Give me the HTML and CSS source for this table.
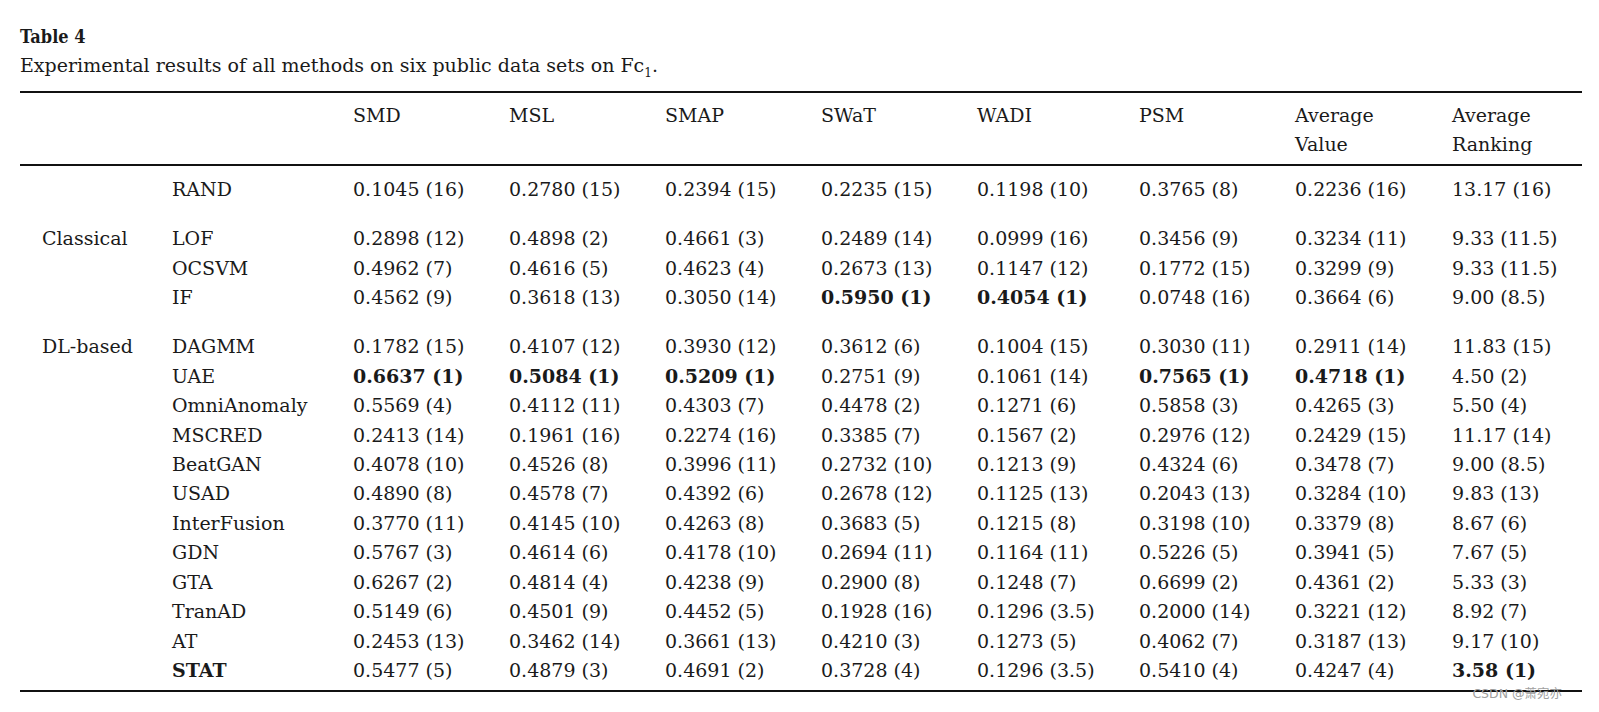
FILE: index.html
```html
<!DOCTYPE html>
<html lang="en">
<head>
<meta charset="utf-8">
<title>Table 4</title>
<link rel="stylesheet" href="styles.css">
</head>
<body>
<div class="page">
  <div class="title">Table 4</div>
  <div class="caption">Experimental results of all methods on six public data sets on Fc<sub>1</sub>.</div>
  <table class="results">
    <colgroup>
      <col class="c-group">
      <col class="c-method">
      <col class="c-num">
      <col class="c-num">
      <col class="c-num">
      <col class="c-num">
      <col class="c-wadi">
      <col class="c-num">
      <col class="c-avgv">
      <col class="c-avgr">
    </colgroup>
    <thead>
      <tr>
        <th class="grp"></th><th></th>
        <th>SMD</th><th>MSL</th><th>SMAP</th><th>SWaT</th><th>WADI</th><th>PSM</th>
        <th>Average<br>Value</th><th>Average<br>Ranking</th>
      </tr>
    </thead>
    <tbody>
      <tr class="first">
        <td class="grp"></td><td>RAND</td>
        <td>0.1045 (16)</td><td>0.2780 (15)</td><td>0.2394 (15)</td><td>0.2235 (15)</td><td>0.1198 (10)</td><td>0.3765 (8)</td><td>0.2236 (16)</td><td>13.17 (16)</td>
      </tr>
      <tr class="gap">
        <td class="grp">Classical</td><td>LOF</td>
        <td>0.2898 (12)</td><td>0.4898 (2)</td><td>0.4661 (3)</td><td>0.2489 (14)</td><td>0.0999 (16)</td><td>0.3456 (9)</td><td>0.3234 (11)</td><td>9.33 (11.5)</td>
      </tr>
      <tr>
        <td class="grp"></td><td>OCSVM</td>
        <td>0.4962 (7)</td><td>0.4616 (5)</td><td>0.4623 (4)</td><td>0.2673 (13)</td><td>0.1147 (12)</td><td>0.1772 (15)</td><td>0.3299 (9)</td><td>9.33 (11.5)</td>
      </tr>
      <tr>
        <td class="grp"></td><td>IF</td>
        <td>0.4562 (9)</td><td>0.3618 (13)</td><td>0.3050 (14)</td><td><b>0.5950 (1)</b></td><td><b>0.4054 (1)</b></td><td>0.0748 (16)</td><td>0.3664 (6)</td><td>9.00 (8.5)</td>
      </tr>
      <tr class="gap">
        <td class="grp">DL-based</td><td>DAGMM</td>
        <td>0.1782 (15)</td><td>0.4107 (12)</td><td>0.3930 (12)</td><td>0.3612 (6)</td><td>0.1004 (15)</td><td>0.3030 (11)</td><td>0.2911 (14)</td><td>11.83 (15)</td>
      </tr>
      <tr>
        <td class="grp"></td><td>UAE</td>
        <td><b>0.6637 (1)</b></td><td><b>0.5084 (1)</b></td><td><b>0.5209 (1)</b></td><td>0.2751 (9)</td><td>0.1061 (14)</td><td><b>0.7565 (1)</b></td><td><b>0.4718 (1)</b></td><td>4.50 (2)</td>
      </tr>
      <tr>
        <td class="grp"></td><td>OmniAnomaly</td>
        <td>0.5569 (4)</td><td>0.4112 (11)</td><td>0.4303 (7)</td><td>0.4478 (2)</td><td>0.1271 (6)</td><td>0.5858 (3)</td><td>0.4265 (3)</td><td>5.50 (4)</td>
      </tr>
      <tr>
        <td class="grp"></td><td>MSCRED</td>
        <td>0.2413 (14)</td><td>0.1961 (16)</td><td>0.2274 (16)</td><td>0.3385 (7)</td><td>0.1567 (2)</td><td>0.2976 (12)</td><td>0.2429 (15)</td><td>11.17 (14)</td>
      </tr>
      <tr>
        <td class="grp"></td><td>BeatGAN</td>
        <td>0.4078 (10)</td><td>0.4526 (8)</td><td>0.3996 (11)</td><td>0.2732 (10)</td><td>0.1213 (9)</td><td>0.4324 (6)</td><td>0.3478 (7)</td><td>9.00 (8.5)</td>
      </tr>
      <tr>
        <td class="grp"></td><td>USAD</td>
        <td>0.4890 (8)</td><td>0.4578 (7)</td><td>0.4392 (6)</td><td>0.2678 (12)</td><td>0.1125 (13)</td><td>0.2043 (13)</td><td>0.3284 (10)</td><td>9.83 (13)</td>
      </tr>
      <tr>
        <td class="grp"></td><td>InterFusion</td>
        <td>0.3770 (11)</td><td>0.4145 (10)</td><td>0.4263 (8)</td><td>0.3683 (5)</td><td>0.1215 (8)</td><td>0.3198 (10)</td><td>0.3379 (8)</td><td>8.67 (6)</td>
      </tr>
      <tr>
        <td class="grp"></td><td>GDN</td>
        <td>0.5767 (3)</td><td>0.4614 (6)</td><td>0.4178 (10)</td><td>0.2694 (11)</td><td>0.1164 (11)</td><td>0.5226 (5)</td><td>0.3941 (5)</td><td>7.67 (5)</td>
      </tr>
      <tr>
        <td class="grp"></td><td>GTA</td>
        <td>0.6267 (2)</td><td>0.4814 (4)</td><td>0.4238 (9)</td><td>0.2900 (8)</td><td>0.1248 (7)</td><td>0.6699 (2)</td><td>0.4361 (2)</td><td>5.33 (3)</td>
      </tr>
      <tr>
        <td class="grp"></td><td>TranAD</td>
        <td>0.5149 (6)</td><td>0.4501 (9)</td><td>0.4452 (5)</td><td>0.1928 (16)</td><td>0.1296 (3.5)</td><td>0.2000 (14)</td><td>0.3221 (12)</td><td>8.92 (7)</td>
      </tr>
      <tr>
        <td class="grp"></td><td>AT</td>
        <td>0.2453 (13)</td><td>0.3462 (14)</td><td>0.3661 (13)</td><td>0.4210 (3)</td><td>0.1273 (5)</td><td>0.4062 (7)</td><td>0.3187 (13)</td><td>9.17 (10)</td>
      </tr>
      <tr class="last">
        <td class="grp"></td><td><b>STAT</b></td>
        <td>0.5477 (5)</td><td>0.4879 (3)</td><td>0.4691 (2)</td><td>0.3728 (4)</td><td>0.1296 (3.5)</td><td>0.5410 (4)</td><td>0.4247 (4)</td><td><b>3.58 (1)</b></td>
      </tr>
    </tbody>
  </table>
  <div class="watermark">CSDN @萧宛亦</div>
</div>
</body>
</html>
```

FILE: styles.css
```css
html, body {
  margin: 0;
  padding: 0;
  background: #ffffff;
}

.page {
  position: relative;
  box-sizing: border-box;
  min-height: 712px;
  padding: 25px 17px 0 20px;
  font-family: "DejaVu Serif", "Liberation Serif", serif;
  font-size: 19px;
  color: #1a1a1a;
}

.title {
  font-family: "DejaVu Serif Condensed", "DejaVu Serif", serif;
  font-stretch: condensed;
  font-weight: bold;
  font-size: 18px;
  line-height: 23px;
}

.caption {
  line-height: 22px;
  margin-top: 6px;
}

.caption sub {
  font-size: 12px;
  line-height: 0;
}

.results {
  margin-top: 15px;
  width: 1562px;
  table-layout: fixed;
  border-collapse: collapse;
  border-top: 2px solid #111111;
  border-bottom: 2px solid #111111;
}

.c-group { width: 152px; }
.c-method { width: 181px; }
.c-num { width: 156px; }
.c-wadi { width: 162px; }
.c-avgv { width: 157px; }
.c-avgr { width: 130px; }

.results th,
.results td {
  padding: 0;
  text-align: left;
  vertical-align: top;
  font-weight: normal;
  line-height: 29.4px;
  white-space: nowrap;
}

.results th.grp,
.results td.grp {
  padding-left: 22px;
}

.results thead th {
  padding-top: 8px;
  padding-bottom: 4px;
  border-bottom: 2px solid #111111;
}

.results tr.first td {
  padding-top: 9px;
}

.results tr.gap td {
  padding-top: 20px;
}

.results tr.last td {
  padding-bottom: 5px;
}

.results b {
  font-weight: bold;
}

.watermark {
  position: absolute;
  right: 37px;
  top: 685px;
  font-family: "DejaVu Sans", "Noto Sans CJK SC", sans-serif;
  font-size: 12.5px;
  color: #a0a0a0;
  line-height: 18px;
}
```
